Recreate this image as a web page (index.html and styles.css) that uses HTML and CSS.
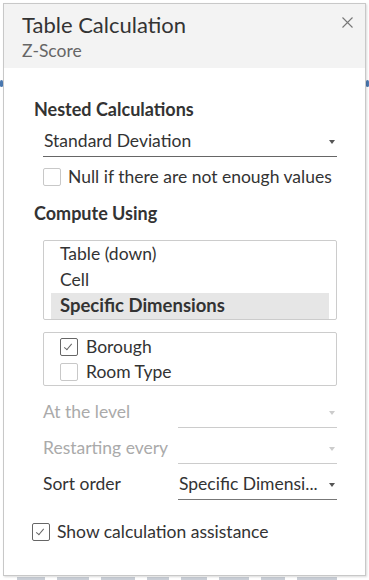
FILE: index.html
```html
<!DOCTYPE html>
<html lang="en">
<head>
    <meta charset="UTF-8">
    <title>Table Calculation</title>
    <link rel="stylesheet" href="styles.css">
</head>
<body>
    <div class="backdrop">
        <span class="dot dot-left"></span>
        <span class="dot dot-right"></span>

        <!-- Table calculation dialog -->
        <div class="dialog">
            <div class="dialog-header">
                <div class="titles">
                    <div class="title">Table Calculation</div>
                    <div class="subtitle">Z-Score</div>
                </div>
                <svg class="close" width="11" height="11" viewBox="0 0 11 11">
                    <path d="M0.5 0.5 L10.5 10.5 M10.5 0.5 L0.5 10.5" stroke="#777" stroke-width="1.1" fill="none"/>
                </svg>
            </div>

            <div class="dialog-body">
                <h3 class="section">Nested Calculations</h3>
                <div class="select wide">
                    <span class="select-text">Standard Deviation</span>
                    <span class="arrow"></span>
                </div>
                <label class="check indent">
                    <span class="box"></span>
                    <span>Null if there are not enough values</span>
                </label>

                <h3 class="section compute">Compute Using</h3>
                <div class="listbox">
                    <div class="list-item">Table (down)</div>
                    <div class="list-item">Cell</div>
                    <div class="list-item selected">Specific Dimensions</div>
                </div>

                <div class="dims">
                    <label class="check dim">
                        <span class="box checked"></span>
                        <span>Borough</span>
                    </label>
                    <label class="check dim">
                        <span class="box"></span>
                        <span>Room Type</span>
                    </label>
                </div>

                <div class="fields">
                    <div class="field disabled">
                        <span class="field-label">At the level</span>
                        <div class="select">
                            <span class="select-text">&nbsp;</span>
                            <span class="arrow"></span>
                        </div>
                    </div>
                    <div class="field disabled">
                        <span class="field-label">Restarting every</span>
                        <div class="select">
                            <span class="select-text">&nbsp;</span>
                            <span class="arrow"></span>
                        </div>
                    </div>
                    <div class="field">
                        <span class="field-label">Sort order</span>
                        <div class="select">
                            <span class="select-text">Specific Dimensi...</span>
                            <span class="arrow"></span>
                        </div>
                    </div>
                </div>

                <label class="check assist">
                    <span class="box checked"></span>
                    <span>Show calculation assistance</span>
                </label>
            </div>
        </div>

        <div class="under">
            <span style="width: 28px"></span>
            <span style="width: 32px"></span>
            <span style="width: 34px"></span>
            <span style="width: 22px"></span>
            <span style="width: 26px"></span>
            <span style="width: 30px"></span>
            <span style="width: 24px"></span>
            <span style="width: 40px"></span>
        </div>
    </div>
</body>
</html>
```

FILE: styles.css
```css
body {
    margin: 0;
    background: #fff;
    font-family: 'Lato', 'Liberation Sans', sans-serif;
    color: #333;
}

.backdrop {
    position: relative;
    width: 369px;
    height: 580px;
    overflow: hidden;
    padding: 3px 0 0 3px;
    box-sizing: border-box;
}

.dot {
    position: absolute;
    top: 80px;
    width: 3px;
    height: 7px;
    border-radius: 2px;
    background: #4a78b0;
}

.dot-left {
    left: 0;
}

.dot-right {
    right: 0;
}

.dialog {
    position: relative;
    z-index: 1;
    width: 361px;
    height: 571px;
    border: 1px solid #c8c8c8;
    background: #fff;
    box-shadow: 1px 1px 2px rgba(0, 0, 0, 0.15);
    display: flex;
    flex-direction: column;
}

.dialog-header {
    background: #f3f3f3;
    height: 64px;
    padding: 0 12px 0 18px;
    display: flex;
    justify-content: space-between;
    align-items: flex-start;
    flex: none;
}

.title {
    font-size: 22px;
    line-height: 26px;
    margin-top: 8px;
    color: #333;
}

.subtitle {
    font-size: 17.5px;
    line-height: 22px;
    margin-top: 2px;
    color: #666;
}

.close {
    margin-top: 13px;
}

.dialog-body {
    padding: 30px 28px 0 30px;
    display: flex;
    flex-direction: column;
}

.section {
    margin: 0;
    font-size: 18px;
    line-height: 22px;
    font-weight: bold;
    color: #333;
}

.section.compute {
    margin-top: 12px;
}

.select {
    display: flex;
    align-items: flex-start;
    justify-content: space-between;
    height: 26px;
    border-bottom: 1px solid #666;
    font-size: 17.5px;
    line-height: 22px;
    padding: 0 1px;
}

.select.wide {
    margin: 10px 0 0 9px;
}

.select-text {
    white-space: nowrap;
}

.arrow {
    align-self: center;
    width: 0;
    height: 0;
    border-left: 3.5px solid transparent;
    border-right: 3.5px solid transparent;
    border-top: 4px solid #555;
    margin: 0 1px 2px 0;
}

.check {
    display: flex;
    align-items: center;
    gap: 7px;
    font-size: 17.5px;
    line-height: 26px;
}

.check.indent {
    margin: 7px 0 0 9px;
}

.box {
    width: 16px;
    height: 16px;
    border: 1px solid #c8c8c8;
    border-radius: 2px;
    background: #fff;
    position: relative;
    flex: none;
}

.box.checked {
    border-color: #666;
}

.box.checked::after {
    content: "";
    position: absolute;
    left: 5px;
    top: 3px;
    width: 3px;
    height: 7px;
    border-right: 1.5px solid #666;
    border-bottom: 1.5px solid #666;
    transform: rotate(40deg);
}

.listbox {
    margin: 16px 0 0 9px;
    height: 78px;
    border: 1px solid #ccc;
    border-radius: 2px;
    padding: 0 7px;
    overflow: hidden;
}

.list-item {
    height: 26px;
    line-height: 25px;
    font-size: 17.5px;
    padding-left: 9px;
}

.list-item.selected {
    background: #e6e6e6;
    font-weight: bold;
    font-size: 18.5px;
}

.dims {
    margin: 12px 0 0 9px;
    height: 51px;
    border: 1px solid #ccc;
    border-radius: 2px;
    padding: 1px 16px 0;
}

.check.dim {
    line-height: 25px;
    gap: 8px;
}

.fields {
    display: flex;
    flex-direction: column;
    gap: 9px;
    margin: 15px 0 0 9px;
}

.field {
    display: flex;
    align-items: baseline;
    font-size: 17.5px;
    line-height: 22px;
}

.field-label {
    width: 135px;
    flex: none;
}

.field .select {
    flex: 1;
    border-bottom-color: #777;
}

.field.disabled {
    color: #aaa;
}

.field.disabled .select {
    border-bottom-color: #ccc;
}

.field.disabled .arrow {
    border-top-color: #ccc;
}

.check.assist {
    margin: 21px 0 0 -2px;
    line-height: 22px;
}

.under {
    display: flex;
    gap: 12px;
    padding-left: 14px;
    margin-top: 1px;
}

.under span {
    height: 4px;
    background: #c9ced6;
}
```
